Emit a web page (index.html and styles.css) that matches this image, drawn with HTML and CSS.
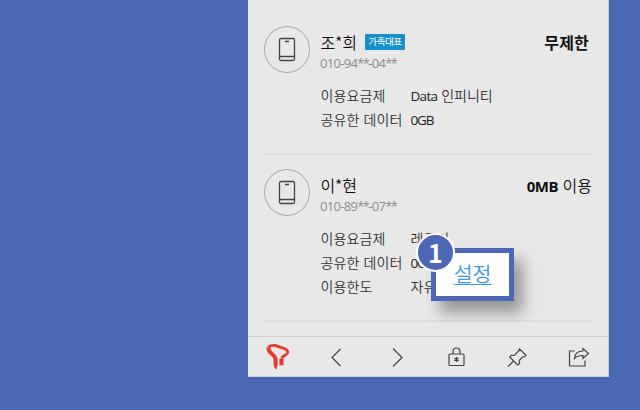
FILE: index.html
```html
<!DOCTYPE html>
<html lang="ko">
<head>
<meta charset="utf-8">
<title>데이터 공유</title>
<link rel="stylesheet" href="styles.css">
</head>
<body>
<main class="phone">
  <section class="member">
    <div class="avatar">
      <svg width="18" height="25" viewBox="0 0 18 25"><rect x="1.5" y="1.5" width="15" height="22" rx="1.5"/><path d="M1.5 19.5h15M7 4.5h4"/></svg>
    </div>
    <div class="info">
      <div class="head"><span class="name">조*희</span><span class="tag">가족대표</span><span class="usage"><b class="unlimited">무제한</b></span></div>
      <div class="number">010-94<i>**</i>-04<i>**</i></div>
      <dl class="details">
        <dt>이용요금제</dt><dd><span class="latin">Data</span> 인피니티</dd>
        <dt>공유한 데이터</dt><dd><span class="latin size">0GB</span></dd>
      </dl>
    </div>
  </section>
  <section class="member second">
    <div class="avatar">
      <svg width="18" height="25" viewBox="0 0 18 25"><rect x="1.5" y="1.5" width="15" height="22" rx="1.5"/><path d="M1.5 19.5h15M7 4.5h4"/></svg>
    </div>
    <div class="info">
      <div class="head"><span class="name">이*현</span><span class="usage"><b class="amount">0MB</b> 이용</span></div>
      <div class="number">010-89<i>**</i>-07<i>**</i></div>
      <dl class="details">
        <dt>이용요금제</dt><dd>레귤러</dd>
        <dt>공유한 데이터</dt><dd><span class="latin size">0GB</span></dd>
        <dt>이용한도</dt><dd>자유</dd>
      </dl>
    </div>
  </section>
  <nav class="toolbar">
    <svg class="logo" viewBox="0 0 40 40"><path class="thick" d="M10.500 10.500C10.200 13 11 14.500 13.500 16.500C17.200 19.500 18 21 17.600 25C17.500 28 17.500 30 19 30.300"/><path d="M10.500 10.500C11.500 8.500 14 8.200 17 8.400L25 11C29 12.500 30.300 14 29.500 16C28.500 18.300 25.500 18 23.500 21"/><path class="thick" d="M23.500 21.500V28.300"/></svg>
    <svg viewBox="0 0 40 40"><path d="M22.500 12 14 20.500l8.500 8.500"/></svg>
    <svg viewBox="0 0 40 40"><path d="M15 11.500l9 9-9 9"/></svg>
    <svg viewBox="0 0 40 40"><rect x="11" y="17" width="15" height="11.500" rx="1"/><path d="M15 17v-2.500a3.500 3.500 0 0 1 7 0v2.500M18.500 20v5M16.300 21.200l4.400 2.600M20.700 21.200l-4.400 2.600"/></svg>
    <svg viewBox="0 0 40 40"><path d="M21.500 12l6.500 6.300-1.500 1.500-2 .2-3.200 3.500.2 3-1.800 1.500-8-8 1.500-1.700 3 .2 4-4zM16 23.500 10 29.500"/></svg>
    <svg viewBox="0 0 40 40"><path d="M16.500 14H11.500v15H27v-5.500M16.500 21.500c.3-5 3.500-7.500 8.500-7.500v-2.500l5.500 5-5.500 5v-3c-4 0-6 .5-8.500 3z"/></svg>
  </nav>
</main>
<a class="setting">설정</a>
<span class="step">1</span>
</body>
</html>
```
FILE: styles.css
```css
* { box-sizing: border-box; }
body {
  margin: 0;
  width: 640px;
  height: 410px;
  overflow: hidden;
  position: relative;
  background: #4c67b4;
  color: #333;
  font-family: "Noto Sans CJK KR", sans-serif;
  font-weight: 350;
}
.phone {
  width: 361px;
  height: 377px;
  margin-left: 248px;
  display: flex;
  flex-direction: column;
  background: #e8e8e8;
  border-right: 1px solid #c9cbd2;
  border-bottom: 1px solid #c9cbd2;
}
.member {
  height: 155px;
  margin: 0 16px;
  padding-top: 26px;
  display: flex;
  gap: 10px;
  border-bottom: 2px solid #dedede;
}
.second { height: 167px; padding-top: 14px; }
.avatar {
  width: 46px;
  height: 47px;
  flex: none;
  border: 1px solid #aaa;
  border-radius: 50%;
  display: grid;
  place-items: center;
}
.avatar svg { fill: none; stroke: #444; stroke-width: 1.3; }
.info { flex: 1; padding-top: 5px; min-width: 0; }
.head {
  height: 22px;
  display: flex;
  align-items: center;
  line-height: 22px;
  white-space: nowrap;
  color: #111;
}
.name { font-size: 16px; font-weight: 350; width: 45px; padding-left: .5px; letter-spacing: -.2px; }
.tag {
  width: 40px;
  height: 16px;
  border-radius: 1px;
  background: #1590c8;
  color: #fff;
  font-size: 9.500px;
  font-weight: 400;
  line-height: 15px;
  letter-spacing: -.4px;
  text-align: center;
}
.usage { margin-left: auto; font-size: 16px; }
.usage b { font-weight: 700; }
.unlimited { margin-right: 3px; letter-spacing: .2px; }
.amount { font-family: "Open Sans", sans-serif; font-size: 15px; letter-spacing: -.5px; }
.number {
  height: 18px;
  line-height: 20px;
  font-family: "Open Sans", sans-serif;
  font-weight: 400;
  font-size: 13px;
  letter-spacing: -.7px;
  color: #8c8c8c;
}
.number i { font-style: normal; letter-spacing: -1.6px; }
.details {
  margin: 12px 0 0;
  padding-left: .5px;
  display: grid;
  grid-template-columns: 90px 1fr;
  grid-auto-rows: 24px;
  line-height: 24px;
  font-size: 14px;
}
dt, dd { margin: 0; white-space: nowrap; }
dt { letter-spacing: .1px; }
.latin { font-family: "Open Sans", sans-serif; font-weight: 400; font-size: 13.500px; letter-spacing: -.7px; color: #222; }
.size { letter-spacing: -1.200px; }
.toolbar {
  margin-top: auto;
  height: 40px;
  padding: 0 10px;
  border-top: 1px solid #d0d0d0;
  display: flex;
  justify-content: space-between;
  align-items: center;
}
.toolbar svg { width: 40px; height: 40px; fill: none; stroke: #444; stroke-width: 1.2; }
.toolbar .logo { stroke: #e33b2e; stroke-width: 2.9; }
.toolbar .thick { stroke-width: 4.1; }
.setting {
  position: absolute;
  left: 431px;
  top: 248px;
  width: 83px;
  height: 53px;
  border: 5px solid #4c67b4;
  background: #fff;
  box-shadow: 9px 12px 14px rgba(0, 0, 0, .35);
  color: #3c96e0;
  font-size: 20.500px;
  line-height: 41px;
  text-align: center;
  text-decoration: underline;
  text-decoration-thickness: 1px;
  text-underline-offset: 2px;
}
.step {
  position: absolute;
  left: 416px;
  top: 233px;
  width: 39px;
  height: 39px;
  border: 2px solid #fff;
  border-radius: 50%;
  background: #4c67b4;
  color: #fff;
  font: 700 25px/34px "Noto Sans CJK KR", sans-serif;
  text-align: center;
}
```
